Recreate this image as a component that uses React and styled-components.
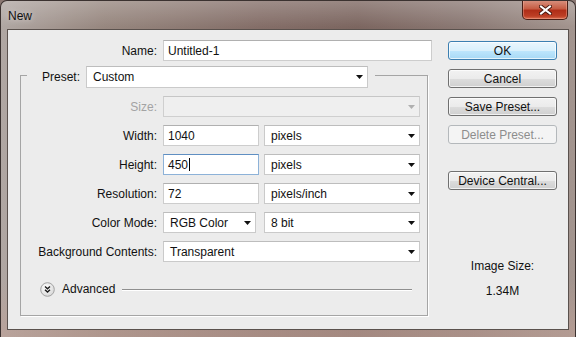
import React from 'react';
import styled, { createGlobalStyle } from 'styled-components';

const GlobalStyle = createGlobalStyle`
  html, body {
    margin: 0;
    padding: 0;
  }
  body {
    font-family: 'Liberation Sans', Arial, sans-serif;
    font-size: 12px;
    color: #000;
    background: #8a7772;
  }
`;

const Window = styled.div`
  width: 576px;
  height: 337px;
  box-sizing: border-box;
  display: flex;
  flex-direction: column;
  border: 1px solid #3b3230;
  border-bottom: none;
  border-radius: 7px 7px 0 0;
  overflow: hidden;
  background:
    linear-gradient(180deg, rgba(255, 255, 255, 0.22), rgba(255, 255, 255, 0) 26px),
    linear-gradient(180deg, rgba(0, 0, 0, 0) 280px, rgba(190, 160, 150, 0.6) 330px),
    linear-gradient(90deg, #b0a7a3 0%, #97877f 18%, #846e68 45%, #7c6660 62%, #8c7a75 82%, #a3958f 100%);
`;

const TitleBar = styled.div`
  height: 28px;
  display: flex;
  align-items: center;
  justify-content: space-between;
  padding-left: 7px;
  flex-shrink: 0;
`;

const Title = styled.span`
  font-size: 12px;
  color: #111;
  margin-top: 1px;
  text-shadow: 0 0 6px rgba(255, 255, 255, 0.6);
`;

const CloseButton = styled.div`
  align-self: flex-start;
  width: 46px;
  height: 20px;
  margin-right: 7px;
  margin-top: -1px;
  box-sizing: border-box;
  border: 1px solid #4a1f16;
  border-top: none;
  border-radius: 0 0 5px 5px;
  background: linear-gradient(180deg, #d99482 0%, #c65d44 45%, #b02e18 55%, #bd3f25 85%, #dc7052 100%);
  box-shadow: inset 0 0 0 1px rgba(255, 200, 180, 0.35);
  display: flex;
  align-items: center;
  justify-content: center;
`;

const Client = styled.div`
  flex: 1;
  margin: 0 6px 7px;
  border: 1px solid #5a514d;
  background: #ececec;
  display: flex;
  gap: 16px;
  padding: 10px 0 0 12px;
`;

const FormColumn = styled.div`
  width: 412px;
  display: flex;
  flex-direction: column;
`;

const NameRow = styled.div`
  display: flex;
  align-items: center;
  height: 21px;
  gap: 6px;
`;

const Label = styled.span`
  width: ${(p) => p.$width || 136}px;
  flex-shrink: 0;
  text-align: right;
  white-space: nowrap;
  color: ${(p) => (p.$disabled ? '#a3a3a3' : '#111')};
`;

const Group = styled.fieldset`
  margin: 5px 0 0;
  padding: 0 0 18px;
  width: 408px;
  min-width: 0;
  box-sizing: border-box;
  border: 1px solid #a5a5a5;
  box-shadow: 1px 1px 0 #fff;
`;

const Legend = styled.legend`
  margin-left: 6px;
  padding: 0 7px 0 15px;
`;

const LegendInner = styled.div`
  display: flex;
  align-items: flex-start;
  gap: 6px;
  height: 18px;
`;

const LegendLabel = styled.span`
  line-height: 22px;
  color: #111;
`;

const Rows = styled.div`
  display: flex;
  flex-direction: column;
  gap: 8px;
  padding-top: 12px;
`;

const Row = styled.div`
  display: flex;
  align-items: center;
  height: 21px;
`;

const Fields = styled.div`
  display: flex;
  align-items: center;
  gap: ${(p) => p.$gap || 5}px;
  margin-left: 6px;
`;

const Combo = styled.div`
  width: ${(p) => p.$width}px;
  height: ${(p) => p.$height || 21}px;
  flex-shrink: 0;
  box-sizing: border-box;
  display: flex;
  align-items: center;
  justify-content: space-between;
  padding: 0 4px 0 6px;
  border: 1px solid ${(p) => (p.$disabled ? '#cfcfcf' : '#cacaca')};
  border-top-color: ${(p) => (p.$disabled ? '#c6c6c6' : '#bdbdbd')};
  background: ${(p) => (p.$disabled ? '#efefef' : '#fff')};
  color: #111;
  white-space: nowrap;
`;

const TextBox = styled.div`
  width: ${(p) => p.$width}px;
  height: 21px;
  flex-shrink: 0;
  box-sizing: border-box;
  display: flex;
  align-items: center;
  padding-left: 4px;
  border: 1px solid ${(p) => (p.$focused ? '#8db2d8' : '#cdcdcd')};
  border-top-color: ${(p) => (p.$focused ? '#5f8fc2' : '#b0b0b0')};
  background: #fff;
  color: #111;
`;

const Caret = styled.span`
  display: inline-block;
  width: 1px;
  height: 13px;
  margin-left: 1px;
  background: #000;
`;

const AdvancedRow = styled.div`
  display: flex;
  align-items: center;
  height: 16px;
  margin-top: 19px;
  padding-left: 19px;
  margin-right: 15px;
  gap: 7px;
`;

const AdvancedText = styled.span`
  color: #111;
`;

const Rule = styled.div`
  flex: 1;
  height: 0;
  border-top: 1px solid #8f8f8f;
  box-shadow: 0 1px 0 #fff;
`;

const ButtonColumn = styled.div`
  width: 109px;
  display: flex;
  flex-direction: column;
  gap: 9px;
  padding-top: 1px;
`;

const Button = styled.button`
  width: 109px;
  height: 19px;
  padding: 0;
  margin-top: ${(p) => p.$offset || 0}px;
  font-family: 'Liberation Sans', Arial, sans-serif;
  font-size: 12px;
  border-radius: 3px;
  border: 1px solid ${(p) => (p.$primary ? '#3c7fb1' : p.disabled ? '#b4b8bb' : '#707070')};
  color: ${(p) => (p.disabled ? '#8d8d8d' : '#111')};
  background: ${(p) =>
    p.$primary
      ? 'linear-gradient(180deg, #eaf6fd 0%, #d9f0fc 50%, #bee6fd 51%, #a7d9f5 100%)'
      : p.disabled
      ? '#f4f4f4'
      : 'linear-gradient(180deg, #f2f2f2 0%, #ebebeb 50%, #dddddd 51%, #cfcfcf 100%)'};
  box-shadow: inset 0 0 0 1px ${(p) => (p.disabled ? 'rgba(255,255,255,0)' : 'rgba(255,255,255,0.7)')};
`;

const ImageInfo = styled.div`
  margin-top: 60px;
  display: flex;
  flex-direction: column;
  align-items: center;
  gap: 11px;
  color: #111;
  line-height: 14px;
`;

const Arrow = ({ color = '#111' }) => (
  <svg width="7" height="4" viewBox="0 0 7 4">
    <polygon points="0,0 7,0 3.5,4" fill={color} />
  </svg>
);

const Select = ({ width, height, value, disabled }) => (
  <Combo $width={width} $height={height} $disabled={disabled}>
    <span>{value}</span>
    <Arrow color={disabled ? '#b0b0b0' : '#111'} />
  </Combo>
);

const ExpandIcon = () => (
  <svg width="15" height="15" viewBox="0 0 15 15">
    <defs>
      <radialGradient id="adv" cx="0.4" cy="0.35" r="0.7">
        <stop offset="0" stopColor="#ffffff" />
        <stop offset="1" stopColor="#d6d6d6" />
      </radialGradient>
    </defs>
    <circle cx="7.5" cy="7.5" r="6.8" fill="url(#adv)" stroke="#a2a2a2" />
    <path d="M5 4.5 L7.5 6.8 L10 4.5 M5 7.8 L7.5 10.1 L10 7.8" fill="none" stroke="#1a1a1a" strokeWidth="1.4" />
  </svg>
);

const CloseGlyph = () => (
  <svg width="13" height="10" viewBox="0 0 13 10">
    <path d="M2 1.5 L11 8.5 M11 1.5 L2 8.5" stroke="#4a1a10" strokeWidth="4" strokeLinecap="square" />
    <path d="M2 1.5 L11 8.5 M11 1.5 L2 8.5" stroke="#fff" strokeWidth="2" strokeLinecap="square" />
  </svg>
);

const App = () => (
  <>
    <GlobalStyle />
    <Window>
      <TitleBar>
        <Title>New</Title>
        <CloseButton>
          <CloseGlyph />
        </CloseButton>
      </TitleBar>
      <Client>
        <FormColumn>
          <NameRow>
            <Label $width={137}>Name:</Label>
            <TextBox $width={269}>Untitled-1</TextBox>
          </NameRow>

          <Group>
            <Legend>
              <LegendInner>
                <LegendLabel>Preset:</LegendLabel>
                <Select width={282} height={22} value="Custom" />
              </LegendInner>
            </Legend>

            <Rows>
              <Row>
                <Label $disabled>Size:</Label>
                <Fields>
                  <Select width={257} value="" disabled />
                </Fields>
              </Row>
              <Row>
                <Label>Width:</Label>
                <Fields>
                  <TextBox $width={96}>1040</TextBox>
                  <Select width={156} value="pixels" />
                </Fields>
              </Row>
              <Row>
                <Label>Height:</Label>
                <Fields>
                  <TextBox $width={96} $focused>
                    450
                    <Caret />
                  </TextBox>
                  <Select width={156} value="pixels" />
                </Fields>
              </Row>
              <Row>
                <Label>Resolution:</Label>
                <Fields>
                  <TextBox $width={96}>72</TextBox>
                  <Select width={156} value="pixels/inch" />
                </Fields>
              </Row>
              <Row>
                <Label>Color Mode:</Label>
                <Fields $gap={8}>
                  <Select width={93} value="RGB Color" />
                  <Select width={156} value="8 bit" />
                </Fields>
              </Row>
              <Row>
                <Label>Background Contents:</Label>
                <Fields>
                  <Select width={257} value="Transparent" />
                </Fields>
              </Row>
            </Rows>

            <AdvancedRow>
              <ExpandIcon />
              <AdvancedText>Advanced</AdvancedText>
              <Rule />
            </AdvancedRow>
          </Group>
        </FormColumn>

        <ButtonColumn>
          <Button $primary>OK</Button>
          <Button>Cancel</Button>
          <Button>Save Preset...</Button>
          <Button disabled>Delete Preset...</Button>
          <Button $offset={18}>Device Central...</Button>
          <ImageInfo>
            <span>Image Size:</span>
            <span>1.34M</span>
          </ImageInfo>
        </ButtonColumn>
      </Client>
    </Window>
  </>
);

export default App;
